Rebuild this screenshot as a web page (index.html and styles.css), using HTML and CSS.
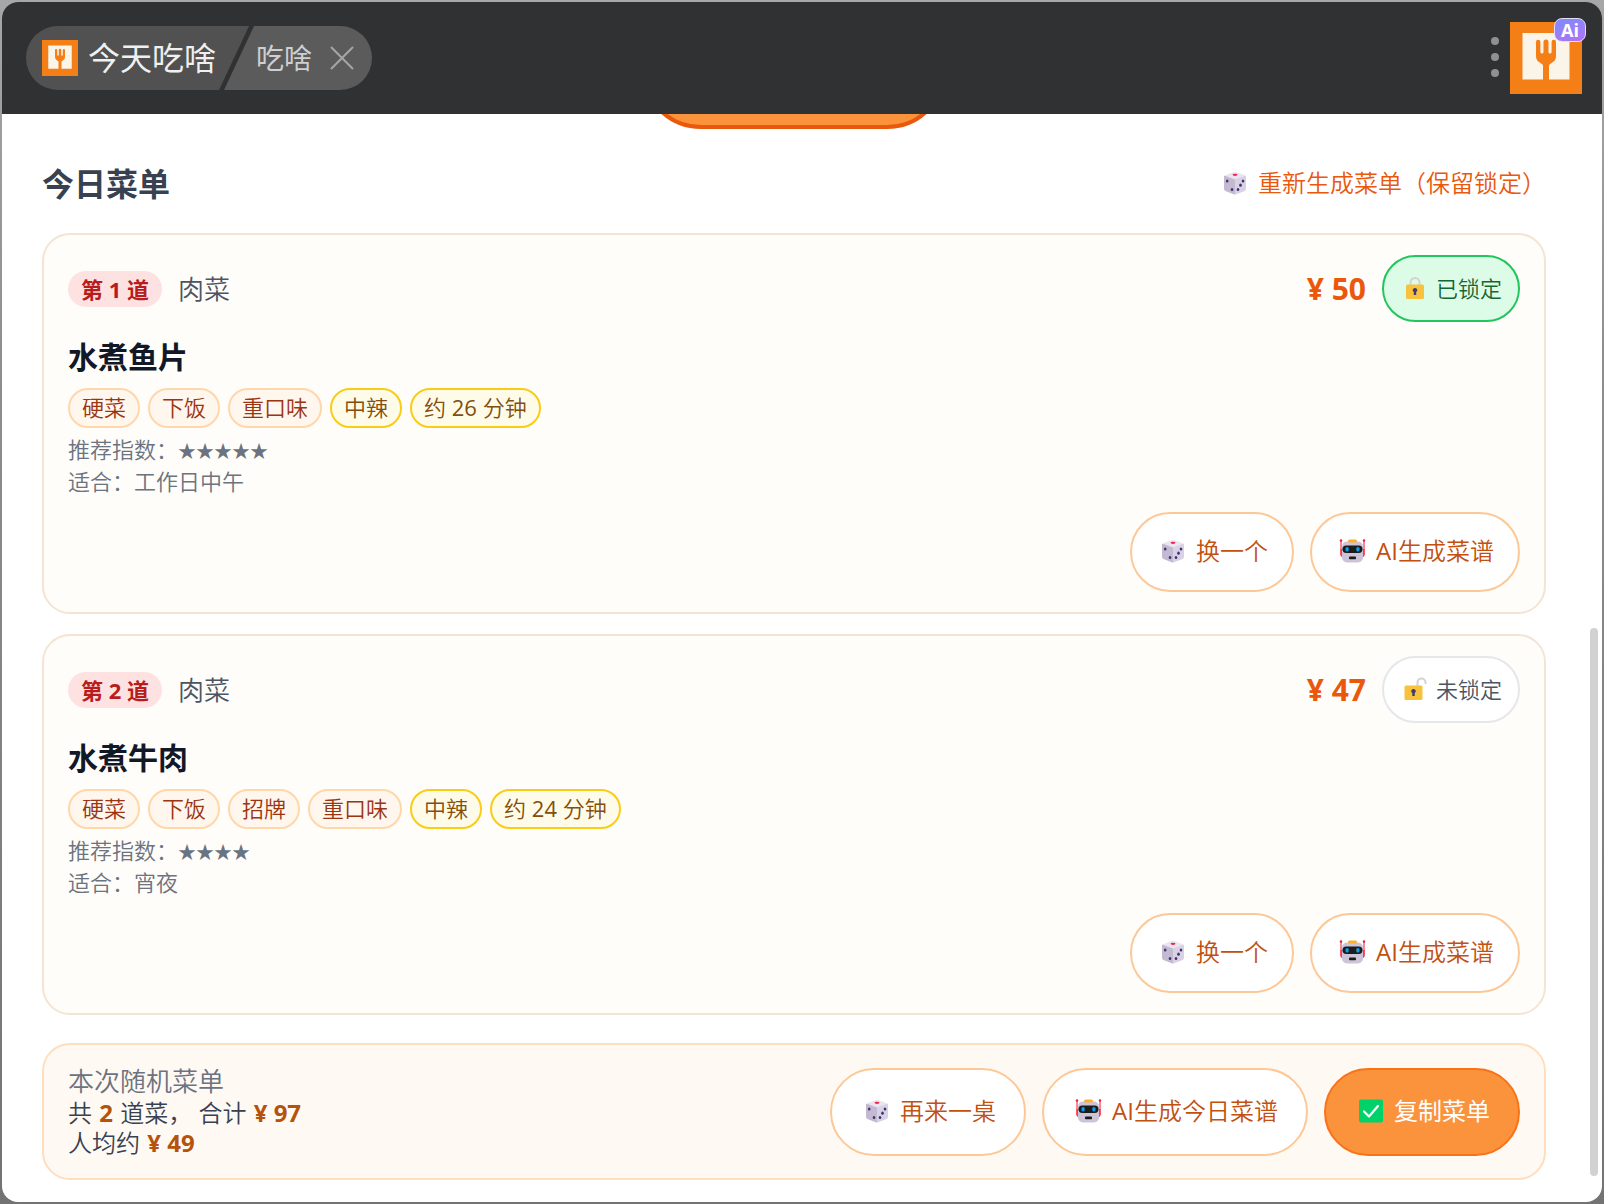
FILE: index.html
```html
<!DOCTYPE html>
<html lang="zh-CN">
<head>
<meta charset="utf-8">
<title>今天吃啥</title>
<link rel="stylesheet" href="styles.css">
</head>
<body>
<svg class="sprite" aria-hidden="true">
  <symbol id="dice" viewBox="0 0 34 24">
    <path d="M15.800 1Q17 0.500 18.200 1L27.500 4.600 17 9 6.500 4.600Z" fill="#ebe5f2"/>
    <path d="M6 5.500Q6 4.300 7.200 4.800L17 8.500V23.800L7.300 19.900Q6 19.300 6 18Z" fill="#c3b9d1"/>
    <path d="M28 5.500Q28 4.300 26.800 4.800L17 8.500V23.800L26.700 19.900Q28 19.300 28 18Z" fill="#d9d1e4"/>
    <ellipse cx="17" cy="3.800" rx="2.500" ry="1.100" fill="#f3254c"/>
    <g fill="#40336f"><ellipse cx="9.200" cy="10" rx="1.300" ry="1.600"/><ellipse cx="14" cy="18.500" rx="1.300" ry="1.600"/><ellipse cx="25" cy="10" rx="1.300" ry="1.600"/><ellipse cx="22.500" cy="14.200" rx="1.300" ry="1.600"/><ellipse cx="20" cy="18.500" rx="1.300" ry="1.600"/></g>
  </symbol>
  <symbol id="robot" viewBox="0 0 34 24">
    <path d="M5 1V16M28 1V16" stroke="#f8394f" stroke-width="1.200"/>
    <circle cx="5" cy="1.500" r="1.200" fill="#e8203f"/><circle cx="28" cy="1.500" r="1.200" fill="#e8203f"/>
    <path d="M4.400 10h2v8q-2 0-2-2zM28.600 10h-2v8q2 0 2-2z" fill="#f8394f"/>
    <rect x="6" y="2.500" width="21" height="21" rx="5" fill="#cdc4d8"/>
    <rect x="12" y="0.500" width="9" height="3" rx="1.500" fill="#fbb02d"/>
    <rect x="6.500" y="6.500" width="20" height="7.500" rx="3.700" fill="#1c1c1c"/>
    <rect x="9.500" y="8" width="3.200" height="4.500" rx="1.600" fill="#0a9fe8"/><rect x="20.300" y="8" width="3.200" height="4.500" rx="1.600" fill="#0a9fe8"/>
    <rect x="13" y="17.500" width="7" height="2.800" rx="0.800" fill="#1c1c1c"/>
  </symbol>
  <symbol id="check" viewBox="0 0 34 24">
    <rect x="5" y="0.500" width="24" height="23" rx="2" fill="#00d26a"/>
    <path d="M10 12.500 15 17.500 24 7" fill="none" stroke="#fff" stroke-width="2.200" stroke-linecap="round" stroke-linejoin="round"/>
  </symbol>
  <symbol id="locked" viewBox="0 0 30 24">
    <path d="M10.500 9V6.500a4.500 4.500 0 0 1 9 0V9" fill="none" stroke="#d3d3d3" stroke-width="2"/>
    <rect x="6" y="8.500" width="18" height="14.500" rx="1.500" fill="#f9c23c"/>
    <path d="M15 12a2.200 2.200 0 0 1 1.200 4.100V19h-2.400V16.100A2.200 2.200 0 0 1 15 12Z" fill="#433b6b"/>
  </symbol>
  <symbol id="unlocked" viewBox="0 0 30 24">
    <path d="M17.500 9V5.500a4 4 0 0 1 8 0V7" fill="none" stroke="#d3d3d3" stroke-width="2"/>
    <rect x="4.500" y="8.500" width="18" height="14.500" rx="1.500" fill="#f9c23c"/>
    <path d="M13.500 12a2.200 2.200 0 0 1 1.200 4.100V19h-2.400V16.100A2.200 2.200 0 0 1 13.500 12Z" fill="#433b6b"/>
  </symbol>
  <symbol id="fork" viewBox="0 0 72 72">
    <path d="M0 0h72v72H0z" fill="#f47f17"/>
    <path d="M12.500 11h47v46.500h-47z" fill="#fbf4e9"/>
    <path d="M26 20a2.200 2.200 0 0 1 4.400 0V30q0 1.500 1.500 1.500T33.500 30V20a2.500 2.500 0 0 1 5 0V30q0 1.500 1.500 1.500T41.600 30V20a2.200 2.200 0 0 1 4.400 0V34Q46 38 43 40L39.500 42.500Q39 43 39 44V58H33V44Q33 43 32.500 42.500L29 40Q26 38 26 34Z" fill="#f47f17"/>
  </symbol>
</svg>

<div class="app">
  <header class="topbar">
    <nav class="crumbs">
      <a class="crumb crumb-app" href="#"><svg class="crumb-logo"><use href="#fork"/></svg>今天吃啥</a>
      <div class="crumb crumb-page">吃啥
        <button class="close" type="button" aria-label="关闭"><svg viewBox="0 0 24 24"><path d="M1 1 23 23M23 1 1 23"/></svg></button>
      </div>
    </nav>
    <div class="topbar-end">
      <button class="more" type="button" aria-label="更多"><span></span><span></span><span></span></button>
      <div class="brand"><svg class="brand-logo"><use href="#fork"/></svg><span class="brand-badge">Ai</span></div>
    </div>
  </header>

  <main class="content">
    <button class="generate" type="button" aria-label="生成菜单"></button>

    <div class="menu-head">
      <h1>今日菜单</h1>
      <button class="link-btn" type="button"><svg class="icon"><use href="#dice"/></svg>重新生成菜单（保留锁定）</button>
    </div>

    <div class="dishes">
      <article class="dish">
        <div class="dish-head">
          <span class="order">第 1 道</span><span class="kind">肉菜</span>
          <span class="price">¥ 50</span>
          <button class="lock is-locked" type="button"><svg class="icon"><use href="#locked"/></svg>已锁定</button>
        </div>
        <h2>水煮鱼片</h2>
        <div class="tags">
          <span class="tag">硬菜</span><span class="tag">下饭</span><span class="tag">重口味</span><span class="tag tag-info">中辣</span><span class="tag tag-info">约 <span class="latin">26</span> 分钟</span>
        </div>
        <div class="notes">
          <p>推荐指数：<span class="stars">★★★★★</span></p>
          <p>适合：工作日中午</p>
        </div>
        <div class="actions">
          <button class="pill" type="button"><svg class="icon"><use href="#dice"/></svg>换一个</button>
          <button class="pill" type="button"><svg class="icon"><use href="#robot"/></svg><span><span class="latin">AI</span>生成菜谱</span></button>
        </div>
      </article>

      <article class="dish">
        <div class="dish-head">
          <span class="order">第 2 道</span><span class="kind">肉菜</span>
          <span class="price">¥ 47</span>
          <button class="lock" type="button"><svg class="icon"><use href="#unlocked"/></svg>未锁定</button>
        </div>
        <h2>水煮牛肉</h2>
        <div class="tags">
          <span class="tag">硬菜</span><span class="tag">下饭</span><span class="tag">招牌</span><span class="tag">重口味</span><span class="tag tag-info">中辣</span><span class="tag tag-info">约 <span class="latin">24</span> 分钟</span>
        </div>
        <div class="notes">
          <p>推荐指数：<span class="stars">★★★★</span></p>
          <p>适合：宵夜</p>
        </div>
        <div class="actions">
          <button class="pill" type="button"><svg class="icon"><use href="#dice"/></svg>换一个</button>
          <button class="pill" type="button"><svg class="icon"><use href="#robot"/></svg><span><span class="latin">AI</span>生成菜谱</span></button>
        </div>
      </article>
    </div>

    <section class="summary">
      <div class="totals">
        <p class="totals-title">本次随机菜单</p>
        <p>共 <strong>2</strong> 道菜， 合计 <strong>¥ 97</strong></p>
        <p>人均约 <strong>¥ 49</strong></p>
      </div>
      <div class="summary-actions">
        <button class="pill pill-lg" type="button"><svg class="icon"><use href="#dice"/></svg>再来一桌</button>
        <button class="pill pill-lg" type="button"><svg class="icon"><use href="#robot"/></svg><span><span class="latin">AI</span>生成今日菜谱</span></button>
        <button class="pill pill-lg pill-primary" type="button"><svg class="icon"><use href="#check"/></svg>复制菜单</button>
      </div>
    </section>
  </main>
  <div class="scroll-thumb"></div>
</div>
</body>
</html>
```
FILE: styles.css
```css
* {
  box-sizing: border-box;
}

body {
  margin: 0;
  padding: 2px;
  min-height: 100vh;
  display: flex;
  background: linear-gradient(#a5a7a9, #8e8e8e 30%, #737374);
  font-family: "Open Sans", "Noto Sans CJK SC", sans-serif;
  font-weight: 350;
  font-size: 24px;
  line-height: 30px;
  color: #374151;
}

h1, h2, p {
  margin: 0;
}

button {
  margin: 0;
  padding: 0;
  border: 0;
  background: none;
  font: inherit;
  color: inherit;
  white-space: nowrap;
  cursor: pointer;
}

.sprite {
  position: absolute;
  width: 0;
  height: 0;
}

/* Latin letters and digits need a heavier cut to match the Han strokes */
.latin {
  font-weight: 400;
}

.app {
  position: relative;
  flex: 1;
  display: flex;
  flex-direction: column;
  min-width: 0;
  overflow: hidden;
  border-radius: 16px;
  background: #fff;
}

/* Title bar */
.topbar {
  display: flex;
  justify-content: space-between;
  align-items: center;
  height: 112px;
  padding: 0 20px 0 24px;
  background: #303133;
}

.crumbs {
  display: flex;
  height: 64px;
  border-radius: 32px;
  overflow: hidden;
  font-weight: 400;
}

.crumb {
  display: flex;
  align-items: center;
  text-decoration: none;
}

.crumb-app {
  gap: 10px;
  padding: 0 33px 0 16px;
  background: #515151;
  color: #f0f0f0;
  font-size: 32px;
  line-height: 32px;
  clip-path: polygon(0 0, 100% 0, calc(100% - 30px) 100%, 0 100%);
}

.crumb-logo {
  width: 36px;
  height: 36px;
}

.crumb-page {
  gap: 18px;
  margin-left: -25px;
  padding: 0 18px 0 32px;
  background: #5b5b5b;
  color: #cfcfcf;
  font-size: 28px;
  line-height: 32px;
  clip-path: polygon(30px 0, 100% 0, 100% 100%, 0 100%);
}

.close,
.close svg {
  display: block;
  width: 24px;
  height: 24px;
}

.close path {
  stroke: #a6a6a6;
  stroke-width: 2;
}

.topbar-end {
  display: flex;
  align-items: center;
  gap: 11px;
}

.more {
  display: flex;
  flex-direction: column;
  gap: 8px;
  padding-bottom: 2px;
}

.more span {
  width: 8px;
  height: 8px;
  border-radius: 50%;
  background: #909090;
}

.brand {
  position: relative;
}

.brand-logo {
  display: block;
  width: 72px;
  height: 72px;
}

.brand-badge {
  position: absolute;
  top: -4px;
  right: -4px;
  width: 32px;
  height: 24px;
  border: 1px solid #e4dcff;
  border-radius: 8px;
  background: linear-gradient(160deg, #7f8cf8, #b072f8);
  color: #fff;
  font-weight: 700;
  font-size: 18px;
  line-height: 22px;
  text-align: center;
}

/* Scrolled page */
.content {
  flex: 1;
  overflow: hidden;
  padding: 0 56px 22px 40px;
}

.generate {
  display: block;
  width: 306px;
  height: 120px;
  margin: -105px auto 0;
  border: 4px solid #ea580c;
  border-radius: 60px;
  background: #fb923c;
}

.menu-head {
  display: flex;
  justify-content: space-between;
  align-items: center;
  height: 46px;
  margin: 32px 0 26px;
}

h1 {
  font-size: 32px;
  font-weight: 700;
}

.link-btn,
.lock,
.pill {
  display: flex;
  align-items: center;
  gap: 6px;
}

.link-btn {
  padding-bottom: 2px;
  color: #ea580c;
}

.icon {
  flex: none;
  width: 34px;
  height: 24px;
}

.dishes {
  display: flex;
  flex-direction: column;
  gap: 20px;
}

.dish {
  padding: 20px 24px;
  border: 2px solid #f3e5d4;
  border-radius: 28px;
  background: #fffdf9;
}

.dish-head {
  display: flex;
  align-items: center;
  gap: 16px;
}

.order {
  padding: 0 13px;
  border-radius: 18px;
  background: #fee2e2;
  color: #b91c1c;
  font-size: 22px;
  font-weight: 700;
  line-height: 36px;
}

.kind {
  color: #4b5563;
  font-size: 26px;
}

.price {
  margin-left: auto;
  color: #ea580c;
  font-size: 30px;
  font-weight: 700;
}

.lock {
  height: 67px;
  padding: 0 16px 2px;
  border: 2px solid #e5e7eb;
  border-radius: 34px;
  background: #fff;
  color: #4b5563;
  font-size: 22px;
}

.lock .icon {
  width: 30px;
}

.lock.is-locked {
  border-color: #22c55e;
  background: #dcfce7;
  color: #166534;
}

h2 {
  margin: 15px 0 11px;
  color: #111827;
  font-size: 30px;
  font-weight: 700;
  line-height: 40px;
}

.tags {
  display: flex;
  flex-wrap: wrap;
  gap: 8px;
}

.tag {
  height: 40px;
  padding: 0 12px;
  border: 2px solid #fed7aa;
  border-radius: 20px;
  background: #fff7ed;
  color: #9a3412;
  font-size: 22px;
  line-height: 34px;
}

.tag-info {
  border-color: #facc15;
  background: #fefce8;
  color: #854d0e;
}

.notes {
  margin: 5px 0 15px;
  color: #6b7280;
  font-size: 22px;
  line-height: 32px;
}

.stars {
  font-size: 18px;
  line-height: 18px;
}

.actions,
.summary-actions {
  display: flex;
  justify-content: flex-end;
  gap: 16px;
}

.pill {
  height: 80px;
  padding: 0 24px 2px;
  border: 2px solid #fdc897;
  border-radius: 40px;
  background: #fff;
  color: #c2500f;
}

.pill-lg {
  height: 88px;
  padding: 0 28px 2px;
  border-radius: 44px;
}

.pill-primary {
  border-color: #f97316;
  background: #fb923c;
  color: #fff;
  font-weight: 400;
}

.summary {
  display: flex;
  justify-content: space-between;
  align-items: center;
  margin-top: 28px;
  padding: 20px 24px;
  border: 2px solid #fddfc0;
  border-radius: 28px;
  background: #fff9f3;
}

.totals-title {
  color: #6b7280;
  font-size: 26px;
  line-height: 33px;
}

.totals strong {
  margin: 0 1px;
  color: #b45309;
  font-weight: 700;
}

/* Overlay scrollbar thumb */
.scroll-thumb {
  position: absolute;
  top: calc(52% + 2px);
  right: 4px;
  bottom: 26px;
  width: 8px;
  border-radius: 4px;
  background: #d2d2d2;
}
```
